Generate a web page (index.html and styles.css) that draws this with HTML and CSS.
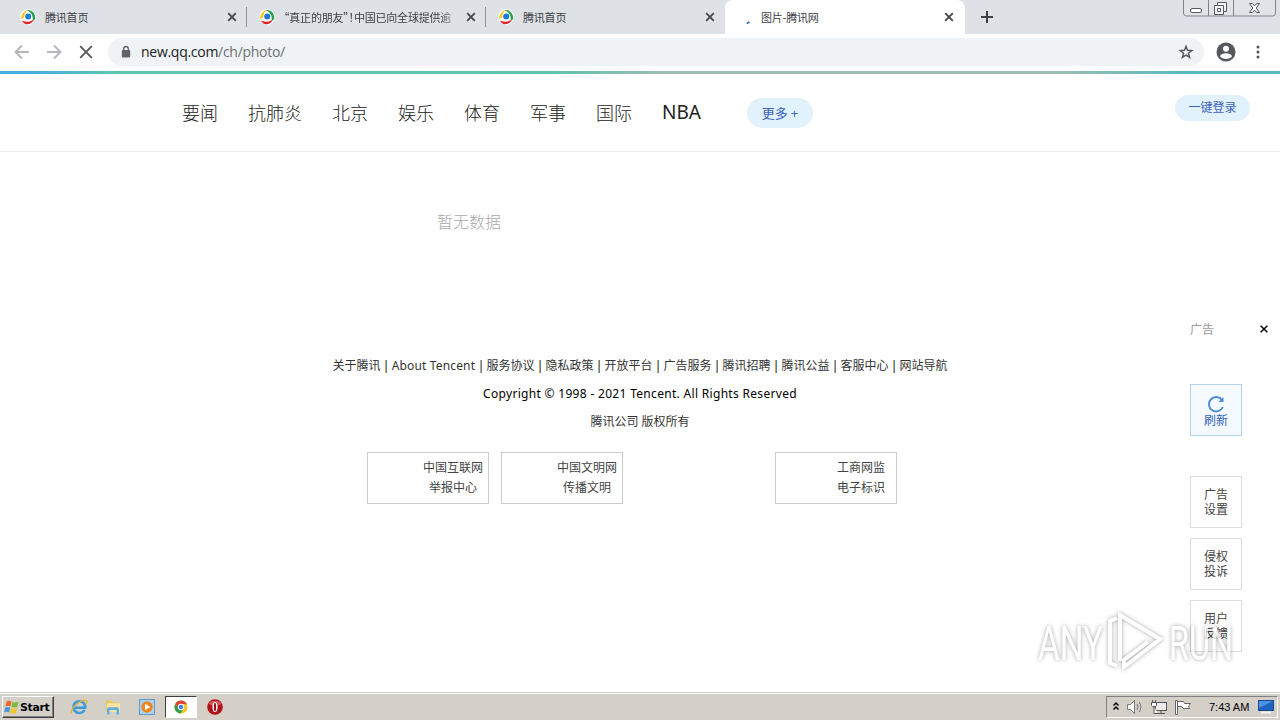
FILE: index.html
```
<!DOCTYPE html>
<html lang="zh-CN">
<head>
    <meta charset="UTF-8">
    <meta name="viewport" content="width=device-width, initial-scale=1.0">
    <title>图片-腾讯网</title>
    <link rel="stylesheet" href="styles.css">
</head>
<body>
    <svg class="defs" width="0" height="0">
        <symbol id="qq" viewBox="0 0 16 16">
            <circle cx="8" cy="8" r="7.8" fill="#fff"/>
            <path d="M1.200 10.500C1 6 3 2.500 7.500.8 5.500 3 4.500 5 4.300 8z" fill="#f8c81c"/>
            <path d="M6.800 1.200C12 .5 15.800 4.500 15 10.500l-2.300 1C13.300 7 11.500 3.300 6.800 1.200z" fill="#1fa24a"/>
            <path d="M1.800 11.300c3.500 2.200 8 1.800 12.200-.9-1.800 4.800-9.500 7.500-12.200.9z" fill="#e0222b"/>
            <circle cx="8.200" cy="7.600" r="3" fill="#1a7ad4"/>
        </symbol>
        <symbol id="close" viewBox="0 0 16 16">
            <path d="M4.200 4.200l7.600 7.600M11.800 4.200l-7.600 7.600" stroke="#45494d" stroke-width="1.900"/>
        </symbol>
    </svg>

    <div class="tabs">
        <div class="tab">
            <svg class="icon"><use href="#qq"/></svg>
            <span class="title">腾讯首页</span>
            <svg class="icon"><use href="#close"/></svg>
        </div>
        <div class="tab">
            <svg class="icon"><use href="#qq"/></svg>
            <span class="title fade">“真正的朋友”！中国已向全球提供逾</span>
            <svg class="icon"><use href="#close"/></svg>
        </div>
        <div class="tab last">
            <svg class="icon"><use href="#qq"/></svg>
            <span class="title">腾讯首页</span>
            <svg class="icon"><use href="#close"/></svg>
        </div>
        <div class="tab active">
            <svg class="icon" viewBox="0 0 16 16"><path d="M9.800 14.500l2.700-1.500" stroke="#2b6fc4" stroke-width="1.900"/></svg>
            <span class="title">图片-腾讯网</span>
            <svg class="icon"><use href="#close"/></svg>
        </div>
        <svg class="plus" width="14" height="14" viewBox="0 0 14 14"><path d="M7 1v12M1 7h12" stroke="#3c4043" stroke-width="2"/></svg>
        <svg class="window-buttons" width="94" height="18" viewBox="0 0 94 18" fill="none" stroke="#7f838b">
            <path d="M.5 0v13q0 3 3 3h86q3 0 3-3V0M25.500 0v16M50.500 0v16" fill="#e2e3e6"/>
            <rect x="7.500" y="8.500" width="11" height="4" rx="1.500" fill="#fff" stroke="#555962"/>
            <path d="M34.500 5.500v-3h9v9h-3M31.500 5.500h9v9h-9zM34.500 8.500h3v3h-3z" stroke="#555962" fill="#f4f4f5"/>
            <path d="M66.500 3.500h3l2 2.500 2-2.500h3l-3.300 4.500 3.300 4.500h-3l-2-2.500-2 2.500h-3l3.300-4.500z" stroke="#555962" fill="#fff"/>
        </svg>
    </div>

    <div class="toolbar">
        <svg width="32" height="32" viewBox="0 0 32 32"><path d="M23 16H10M16 9.500L9.500 16l6.500 6.500" fill="none" stroke="#b4b6b9" stroke-width="1.900"/></svg>
        <svg width="32" height="32" viewBox="0 0 32 32"><path d="M9 16h13M16 9.500l6.500 6.500-6.500 6.500" fill="none" stroke="#b4b6b9" stroke-width="1.900"/></svg>
        <svg width="32" height="32" viewBox="0 0 32 32"><path d="M10.200 10.200l11.600 11.600M21.800 10.200L10.200 21.800" stroke="#55595d" stroke-width="1.900"/></svg>
        <div class="omnibox">
            <svg width="10" height="14" viewBox="0 0 10 14"><rect x=".8" y="5" width="8.400" height="7.500" rx="1" fill="#5f6368"/><path d="M2.700 5.500V3.800a2.300 2.300 0 0 1 4.600 0v1.700" fill="none" stroke="#5f6368" stroke-width="1.300"/></svg>
            <span class="url">new.qq.com<span>/ch/photo/</span></span>
            <svg width="16" height="16" viewBox="0 0 16 16"><path d="M8 2.300l1.500 4 4.300.2-3.400 2.700 1.200 4.200L8 11.100l-3.600 2.300 1.200-4.200-3.400-2.700 4.300-.2z" fill="none" stroke="#54585c" stroke-width="1.400"/></svg>
        </div>
        <svg class="avatar" width="20" height="20" viewBox="0 0 20 20"><circle cx="10" cy="10" r="9.500" fill="#54575c"/><circle cx="10" cy="6.800" r="3" fill="#fff"/><path d="M4 14.300c1-4 11-4 12 0-2.500 3.600-9.500 3.600-12 0z" fill="#fff"/></svg>
        <svg width="4" height="16" viewBox="0 0 4 16" fill="#505458"><circle cx="2" cy="3" r="1.500"/><circle cx="2" cy="8" r="1.500"/><circle cx="2" cy="13" r="1.500"/></svg>
    </div>

    <div class="page">
        <div class="rainbow"></div>
        <header>
            <nav>
                <a>要闻</a>
                <a>抗肺炎</a>
                <a>北京</a>
                <a>娱乐</a>
                <a>体育</a>
                <a>军事</a>
                <a>国际</a>
                <a class="nba">NBA</a>
            </nav>
            <a class="more">更多<span>+</span></a>
            <a class="login">一键登录</a>
        </header>

        <p class="empty">暂无数据</p>

        <footer>
            <div class="links">
                <a>关于腾讯</a><i>|</i><a class="about">About Tencent</a><i>|</i><a>服务协议</a><i>|</i><a>隐私政策</a><i>|</i><a>开放平台</a><i>|</i><a>广告服务</a><i>|</i><a>腾讯招聘</a><i>|</i><a>腾讯公益</a><i>|</i><a>客服中心</a><i>|</i><a>网站导航</a>
            </div>
            <div class="copyright">Copyright © 1998 - 2021 Tencent. All Rights Reserved</div>
            <div>腾讯公司 版权所有</div>
            <div class="badges">
                <a>中国互联网<br>举报中心</a>
                <a>中国文明网<br>传播文明</a>
                <a class="blank"></a>
                <a>工商网监<br>电子标识</a>
            </div>
        </footer>

        <!-- floating tools -->
        <aside>
            <div class="ad">
                <span>广告</span>
                <svg width="8" height="8" viewBox="0 0 8 8"><path d="M.7.7l6.600 6.600M7.300.7L.7 7.300" stroke="#000" stroke-width="1.500"/></svg>
            </div>
            <a class="refresh">
                <svg width="18" height="18" viewBox="0 0 18 18"><path d="M15.800 12A7.200 7.200 0 1 1 15 5" fill="none" stroke="#4a8bd8" stroke-width="1.900"/><path d="M16.500 2v5H11.500z" fill="#4a8bd8"/></svg>
                <span>刷新</span>
            </a>
            <a>广告<br>设置</a>
            <a>侵权<br>投诉</a>
            <a>用户<br>反馈</a>
        </aside>

        <svg class="watermark" width="210" height="76" viewBox="0 0 210 76">
            <g fill="#fff" font-family="Roboto, sans-serif" font-size="49">
                <text x="8" y="55" textLength="65" lengthAdjust="spacingAndGlyphs">ANY</text>
                <text x="139" y="55" textLength="64" lengthAdjust="spacingAndGlyphs">RUN</text>
            </g>
            <path d="M87 13l-7 3v42l7 3M90 56V10l40 24-36 28v-7l24-18" fill="none" stroke="#fff" stroke-width="4"/>
        </svg>
    </div>

    <div class="taskbar">
        <div class="start">
            <svg width="16" height="16" viewBox="0 0 16 16">
                <path d="M2.500 2.500q2.500-1.500 5 0L6.500 7.500q-2.500-1.300-5 0z" fill="#ea6a2c"/>
                <path d="M8.500 3q3 1.200 6-.2l-1.200 5q-3 1.200-5.800-.1z" fill="#7cb83c"/>
                <path d="M1.300 8.500q2.500-1.200 5 0l-1.200 5q-2.300-1.300-5 0z" fill="#4a97dc"/>
                <path d="M7.300 9q2.900 1.200 5.700-.1l-1.200 5q-3 1.200-5.700 0z" fill="#f5c52e"/>
            </svg>
            Start
        </div>
        <svg class="task" viewBox="0 0 18 18">
            <path d="M14.500 12A5.900 5.900 0 1 1 15.200 9.700H5" fill="none" stroke="#3b9bdc" stroke-width="2.600"/>
            <path d="M1.500 15.500C-1 10 13 .5 16.500 2.500q1 1-.8 3.800" fill="none" stroke="#e8b42c" stroke-width="1.400"/>
        </svg>
        <svg class="task" viewBox="0 0 18 18">
            <path d="M2 2.500h5l1.500 1.700H15V14H2z" fill="#e9c860"/>
            <path d="M3 5.200h13V14H3z" fill="#f7e6a2"/>
            <path d="M3 16.500V11q0-1.800 2-1.800h8q2 0 2 1.800v5.500h-2.500V12h-7v4.500z" fill="#63aee0"/>
        </svg>
        <svg class="task" viewBox="0 0 18 18">
            <rect x="1.500" y="1.500" width="15" height="15" fill="#a9d2f1" stroke="#5c9dce"/>
            <circle cx="9" cy="9" r="5.700" fill="#f0861c"/>
            <path d="M7 5.700L12.300 9 7 12.300z" fill="#fff"/>
        </svg>
        <div class="running">
            <svg width="14" height="14" viewBox="0 0 16 16">
                <circle cx="8" cy="8" r="7.500" fill="#f6c52c"/>
                <path d="M1.400 4.500A7.500 7.500 0 0 1 14.700 4.800H8L5 9.800z" fill="#dc4436"/>
                <path d="M1.400 4.500A7.500 7.500 0 0 0 7.600 15.500L10.800 10 5 9.800z" fill="#2f9f58"/>
                <circle cx="8" cy="8" r="3.600" fill="#fff"/>
                <circle cx="8" cy="8" r="2.700" fill="#4284e8"/>
            </svg>
        </div>
        <svg class="task" viewBox="0 0 18 18">
            <circle cx="9" cy="9" r="7.800" fill="#b01218"/>
            <path d="M2.500 6a7 5 0 0 1 13 0q-6.500 3-13 0z" fill="#d8595c"/>
            <ellipse cx="9" cy="9" rx="2.600" ry="5" fill="#fff"/>
            <ellipse cx="9" cy="9" rx="1.100" ry="4.300" fill="#a40c12"/>
        </svg>

        <div class="tray">
            <svg width="8" height="12" viewBox="0 0 8 12"><path d="M1.500 4.500L4 2l2.500 2.500M1.500 8.500L4 6l2.500 2.500" fill="none" stroke="#000" stroke-width="1.500"/></svg>
            <svg width="18" height="16" viewBox="0 0 18 16" stroke="#777" fill="none"><path d="M1.500 5.500h3l4-4v13l-4-4h-3z" fill="#fff"/><path d="M11 5q2 3 0 6M13.300 3q3.200 5 0 10"/></svg>
            <svg width="18" height="16" viewBox="0 0 18 16" stroke="#555"><rect x="5.500" y="3.500" width="11" height="8" fill="#ececec"/><path d="M8 14.500h7M11 12v2" fill="none"/><path d="M2.500 1v3M5.500 1v3M1.500 3.500h5v3l-1 1h-3l-1-1zM4 7.500v7h4" fill="#fff"/></svg>
            <svg width="18" height="16" viewBox="0 0 18 16" stroke="#666" fill="#fff"><path d="M1.500 1.500h2v14h-2zM3.500 2.500h6l1 2h6l-2 3 1 2H9l-1-2H3.500z"/></svg>
            <span class="clock">7:43 AM</span>
            <svg width="16" height="14" viewBox="0 0 16 14"><rect x=".5" y=".5" width="15" height="10" fill="#1e63c0" stroke="#174a91"/><path d="M1 1h14L1 8z" fill="#4e93e2"/><path d="M3 12.500h10" stroke="#f2f2f2" stroke-width="2"/></svg>
        </div>
    </div>
</body>
</html>
```
FILE: styles.css
```
* {
    box-sizing: border-box;
}
body {
    margin: 0;
    width: 1280px;
    height: 720px;
    overflow: hidden;
    display: flex;
    flex-direction: column;
    background: #fff;
    font-family: "Noto Sans", "Noto Sans CJK SC", sans-serif;
    font-size: 12px;
    color: #333;
}
svg {
    display: block;
    flex: none;
}
.defs {
    position: absolute;
}

/* browser */
.tabs {
    display: flex;
    height: 34px;
    flex: none;
    padding-left: 8px;
    background: #dee1e6;
}
.tab {
    display: flex;
    align-items: center;
    width: 239px;
    padding: 0 7px 0 12px;
    background: linear-gradient(#8e9197, #8e9197) right center / 1px 20px no-repeat;
}
.tab.last {
    background: none;
}
.tab .icon {
    width: 16px;
    height: 16px;
}
.tab .title {
    flex: 1;
    margin: 0 9px;
    font-family: "Noto Sans CJK SC", sans-serif;
    font-size: 11px;
    letter-spacing: -0.2px;
    line-height: 16px;
    white-space: nowrap;
    overflow: hidden;
    color: #3c4043;
}
.tab .fade {
    margin-right: 2px;
    font-feature-settings: "halt";
    -webkit-mask-image: linear-gradient(90deg, #000 88%, transparent);
    mask-image: linear-gradient(90deg, #000 88%, transparent);
}
.tab.active {
    width: 240px;
    padding-right: 8px;
    background: #fff;
    border-radius: 8px 8px 0 0;
}
.tab.active .title {
    margin-left: 8px;
}
.plus {
    margin: 10px 0 0 15px;
}
.window-buttons {
    margin: 0 3px 0 auto;
}
.toolbar {
    display: flex;
    align-items: center;
    height: 37px;
    flex: none;
    padding: 0 20px 1px 6px;
}
.omnibox {
    display: flex;
    align-items: center;
    width: 1096px;
    height: 28px;
    margin-left: 6px;
    padding: 0 10px 0 13px;
    border-radius: 14px;
    background: #f0f3f5;
}
.url {
    flex: 1;
    margin-left: 10px;
    padding-bottom: 1px;
    font-family: "Open Sans", sans-serif;
    font-size: 14px;
    letter-spacing: -0.28px;
    color: #202124;
}
.url span {
    color: #6b6f74;
}
.avatar {
    margin: 0 20px 0 12px;
}

/* page */
.page {
    position: relative;
    flex: 1;
}
.rainbow {
    height: 3px;
    background: linear-gradient(90deg, #45aee0 0, #45aee0 30px, #5fc4b0 110px, #62c1ae 560px, #9bbdb2 660px, #9bbdb2 1060px, #5bbac0 1180px, #5bbac0 100%);
}
header {
    display: flex;
    align-items: center;
    height: 78px;
    padding: 0 30px 0 182px;
    border-bottom: 1px solid #ececec;
}
nav {
    display: flex;
    align-items: center;
    gap: 30px;
    width: 565px;
    padding-bottom: 2px;
    font-family: "Noto Sans CJK SC", sans-serif;
    font-size: 18px;
    font-weight: 300;
    line-height: 30px;
    color: #222;
}
.nba {
    padding-top: 1px;
    font-family: "Noto Sans", sans-serif;
    font-size: 19px;
    font-weight: 400;
}
.more {
    width: 66px;
    height: 30px;
    border-radius: 15px;
    background: #e1f2fc;
    font-size: 13px;
    line-height: 31px;
    text-align: center;
    color: #3d62bd;
}
.more span {
    margin-left: 3px;
}
.login {
    width: 75px;
    height: 26px;
    margin: 0 0 10px auto;
    border-radius: 13px;
    background: #e1f2fc;
    line-height: 26px;
    text-align: center;
    color: #3d62bd;
}
.empty {
    margin: 58px 0 0 437px;
    font-size: 16px;
    font-weight: 300;
    line-height: 24px;
    color: #aaa;
}
footer {
    margin-top: 118px;
    line-height: 28px;
    text-align: center;
}
.links {
    display: flex;
    justify-content: center;
}
.links i {
    width: 11px;
    font-style: normal;
    color: #000;
}
.about {
    width: 84px;
    letter-spacing: 0.15px;
    white-space: nowrap;
}
.copyright {
    letter-spacing: 0.31px;
    color: #000;
}
.badges {
    display: flex;
    gap: 12px;
    margin: 16px 0 0 367px;
}
.badges a {
    width: 122px;
    height: 52px;
    padding: 5px 0 0 50px;
    border: 1px solid #ccc;
    line-height: 20px;
    white-space: nowrap;
    color: #444;
}
.badges .blank {
    width: 128px;
    border: none;
}
aside {
    position: absolute;
    left: 1190px;
    top: 249px;
    width: 78px;
    display: flex;
    flex-direction: column;
    gap: 10px;
    line-height: 15px;
    text-align: center;
}
.ad {
    display: flex;
    align-items: center;
    justify-content: space-between;
    height: 18px;
    margin-bottom: 36px;
    color: #999;
}
aside a {
    width: 52px;
    height: 52px;
    padding-top: 10px;
    border: 1px solid #ddd;
    background: #fff;
    color: #444;
}
aside .refresh {
    display: flex;
    flex-direction: column;
    align-items: center;
    margin-bottom: 30px;
    border-color: #b4d3ea;
    background: #f4faff;
    color: #2f5fc0;
}
.watermark {
    position: absolute;
    left: 1030px;
    top: 534px;
    opacity: 0.7;
    filter: drop-shadow(0 0 2px rgba(0, 0, 0, 0.5));
}

/* taskbar */
.taskbar {
    display: flex;
    align-items: center;
    height: 28px;
    flex: none;
    padding: 1px 2px 0;
    border-top: 1px solid #d4d0c8;
    background: #d4d0c8;
    box-shadow: inset 0 1px #fff;
}
.start {
    display: flex;
    align-items: center;
    width: 52px;
    height: 22px;
    margin-right: 16px;
    padding-left: 1px;
    border: 1px solid;
    border-color: #fff #404040 #404040 #fff;
    box-shadow: inset -1px -1px #808080;
    font: bold 11px "DejaVu Sans", sans-serif;
    letter-spacing: -0.4px;
    color: #000;
}
.task {
    width: 18px;
    height: 18px;
    margin-right: 16px;
}
.running {
    display: flex;
    align-items: center;
    justify-content: center;
    width: 32px;
    height: 22px;
    margin: 0 9px 0 -7px;
    border: 1px solid;
    border-color: #404040 #fff #fff #404040;
    background: #fff;
}
.tray {
    display: flex;
    align-items: center;
    gap: 6px;
    width: 172px;
    height: 22px;
    margin-left: auto;
    padding-left: 5px;
    border: 1px solid;
    border-color: #808080 #fff #fff #808080;
}
.clock {
    width: 43px;
    margin: 0 0 0 11px;
    font: 11px "Liberation Sans", sans-serif;
    white-space: nowrap;
    color: #000;
}
```
